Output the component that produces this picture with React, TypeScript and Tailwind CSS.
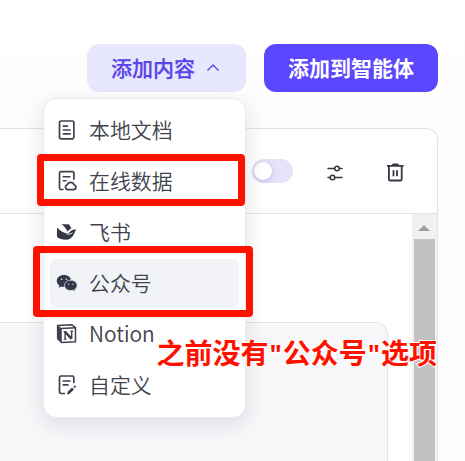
import React from "react";

type IconProps = { children: React.ReactNode; filled?: boolean };

function Icon({ children, filled }: IconProps) {
  return (
    <svg
      viewBox="0 0 22 22"
      className="h-[22px] w-[22px] shrink-0"
      fill={filled ? "#343849" : "none"}
      stroke={filled ? "none" : "#3e414d"}
      strokeWidth={1.7}
      strokeLinecap="round"
      strokeLinejoin="round"
    >
      {children}
    </svg>
  );
}

const DocIcon = () => (
  <Icon>
    <rect x="3.5" y="2" width="14.4" height="17.8" rx="1.6" />
    <path d="M7.3 7.1h4.2M7.3 11h6.8M7.3 14.9h6.8" strokeWidth={1.6} />
  </Icon>
);

const OnlineIcon = () => (
  <Icon>
    <path d="M7 19.5H4.900a1.4 1.4 0 0 1-1.4-1.4V3.100A1.4 1.4 0 0 1 4.900 1.700h11.600a1.4 1.4 0 0 1 1.4 1.4v6" />
    <path d="M7.3 6.800h6.6M7.3 10.700h2.8" strokeWidth={1.6} />
    <path d="M11.800 19.700a2.500 2.500 0 0 1-.5-4.900 3.500 3.500 0 0 1 6.700 0 2.500 2.500 0 0 1-.4 4.900z" strokeWidth={1.7} />
  </Icon>
);

const FeishuIcon = () => (
  <Icon filled>
    <path d="M5.500 3.300h7.300c1.200 1.100 2 2.500 2.500 4.300-1.400.6-2.500 1.700-3.700 3.100C10.200 7.800 8.200 5.200 5.500 3.300z" />
    <path d="M1 6.500c3 3.200 6.400 5.300 10.300 5.900l1.100.1c1.200-1.300 1.900-2.500 3.300-3.300 1.400-.9 3-1 4.600-.5-1.300 1.400-1.600 3-2.500 4.900-1.800 3.500-4.600 5.200-8.300 5.200-3.300 0-6-.8-8.500-2.700z" />
    <path d="M10.900 12.900c2.100.4 3.900.3 5.400-.9" fill="none" stroke="#fff" strokeWidth={0.900} />
  </Icon>
);

const WechatIcon = () => (
  <Icon filled>
    <path d="M8 3C4 3 .8 5.600.8 8.900c0 1.900 1 3.500 2.600 4.600l-.7 2.200 2.600-1.300c.9.300 1.700.4 2.700.4 4 0 7.200-2.600 7.200-5.900S12 3 8 3z" />
    <path
      d="M14.800 8.100c-3.500 0-6.300 2.300-6.300 5.300s2.800 5.200 6.300 5.200c.8 0 1.600-.1 2.300-.4l2.300 1.200-.6-2c1.400-.9 2.300-2.400 2.300-4 0-3-2.800-5.300-6.300-5.300z"
      stroke="#f1f3f8"
      strokeWidth={0.7}
    />
    <g fill="#f1f3f8">
      <circle cx="5.700" cy="7.200" r="0.8" />
      <circle cx="10.400" cy="7.200" r="0.8" />
      <circle cx="12.700" cy="12.100" r="0.7" />
      <circle cx="16.800" cy="12.100" r="0.7" />
    </g>
  </Icon>
);

const NotionIcon = () => (
  <Icon>
    <path d="M1.700 2.600 15.500 1.700l4 2.800v14.300L5.600 19.400 1.700 15.600z" strokeWidth={1.500} />
    <path d="M1.700 2.600 5.300 5.600v13.600L1.700 15.600z" fill="#3e414d" strokeWidth={0.8} />
    <path d="M5.400 5.500 19.500 4.700" strokeWidth={1.400} />
    <path d="M9.100 8.400v8M15.700 8v7.800" strokeWidth={1.400} strokeLinecap="butt" />
    <path d="m9 8.600 6.600 7.300" strokeWidth={2.400} strokeLinecap="butt" />
    <path d="M7.500 8.500h2.500M14.300 8.100h2.800M7.700 16.300h2.800" strokeWidth={1.100} strokeLinecap="butt" />
  </Icon>
);

const CustomIcon = () => (
  <Icon>
    <path d="M8.300 19.500H4.900a1.400 1.400 0 0 1-1.400-1.400V3.400a1.400 1.400 0 0 1 1.400-1.400h11.500a1.400 1.400 0 0 1 1.400 1.400v5.100" />
    <path d="M7.300 7h6.600M7.300 10.900h4.600" strokeWidth={1.700} />
    <path d="m12.700 18.700 4.300-4.300" strokeWidth={2.800} strokeLinecap="butt" />
    <path d="m12.200 19.200 1-1M18.700 12.700l.1-.1" strokeWidth={2.200} />
  </Icon>
);

const items = [
  { label: "本地文档", icon: <DocIcon /> },
  { label: "在线数据", icon: <OnlineIcon /> },
  { label: "飞书", icon: <FeishuIcon /> },
  { label: "公众号", icon: <WechatIcon />, active: true },
  { label: "Notion", icon: <NotionIcon /> },
  { label: "自定义", icon: <CustomIcon /> },
];

function Menu() {
  return (
    <div className="absolute top-[98px] left-[43px] flex h-[320px] w-[203px] flex-col gap-[3px] rounded-[13px] border border-[#ebebef] bg-white px-1.5 py-[7px] shadow-[0_6px_22px_rgba(30,30,50,0.13)]">
      {items.map((item) => (
        <div
          key={item.label}
          className={`flex h-12 shrink-0 items-center gap-[11px] rounded-md pl-1.5 text-[20.9px] font-[350] text-[#40434d] ${item.active ? "bg-[#f1f3f7]" : ""}`}
        >
          {item.icon}
          <span className="pb-0.5 leading-none">{item.label}</span>
        </div>
      ))}
    </div>
  );
}

const Quote = () => (
  <span className="inline-block w-[14.2px] text-center font-['Open_Sans',sans-serif] text-[26px] leading-none font-bold">"</span>
);

export default function App() {
  return (
    <div className="relative flex h-[461px] w-[465px] flex-col overflow-hidden bg-[#fdfdfe] font-['Noto_Sans_CJK_SC',sans-serif]">
      <header className="flex h-32 shrink-0 items-start justify-end gap-[18px] bg-linear-to-b from-white to-[#fdfdfe] pt-11 pr-[27px]">
        <button className="flex h-12 w-[159px] items-center rounded-xl bg-[#e7e7fe] pl-6 text-[21px] font-medium text-[#5a43e8] [-webkit-text-stroke:0.25px_#5a43e8]">
          <span>添加内容</span>
          <svg className="ml-[11px] h-3 w-3.5" viewBox="0 0 14 12" fill="none" stroke="#5a43e8" strokeWidth="1.4">
            <path d="m1.500 8.500 5.500-5.500 5.500 5.500" />
          </svg>
        </button>
        <button className="flex h-12 w-[174px] items-center justify-center rounded-xl bg-[#5c46ff] text-[21px] font-bold text-white">
          添加到智能体
        </button>
      </header>

      <main className="mr-[27px] flex flex-1 flex-col overflow-hidden rounded-tr-xl border-t border-r border-[#e3e3e7] bg-white">
        <div className="flex h-[85px] shrink-0 items-center justify-end border-b border-[#e3e3e7] pr-[31px]">
          <div className="mr-[31px] flex h-6 w-[41px] items-center rounded-full bg-[#e4e3fa] pl-0.5">
            <div className="h-[18px] w-[18px] rounded-full bg-white shadow-[0_1px_4px_rgba(60,50,140,0.25)]" />
          </div>
          <svg className="mt-1 mr-[38px] h-[22px] w-[22px]" viewBox="0 0 22 22" fill="none" stroke="#343744" strokeWidth="1.500" strokeLinecap="round">
            <path d="M4 6.500h6.500M15.500 6.500h2.500M4 15.500h2M11 15.500h7" />
            <circle cx="13" cy="6.500" r="2.300" />
            <circle cx="8.500" cy="15.500" r="2.300" />
          </svg>
          <svg className="mt-0.5 h-[22px] w-[22px]" viewBox="0 0 22 22" fill="none" stroke="#343744" strokeWidth="1.800">
            <path d="M3 4.900h16.600M4.900 5v13.200q0 1.300 1.300 1.300h10.200q1.300 0 1.300-1.300V5M9.500 9.200v6M13 9.200v6" />
            <path d="M7.700 4.700q0-2.300 2-2.300h3.300q2 0 2 2.300z" fill="#343744" stroke="none" />
          </svg>
        </div>
        <div className="flex min-h-0 flex-1 justify-between">
          <div className="mt-[108px] w-[388px] rounded-tr-xl border-t border-r border-[#e2e3e8] bg-[#f8f8fb]" />
          <div className="flex w-[25px] flex-col bg-[#f1f1f1] pr-px">
            <div className="flex h-[25px] items-center justify-center pt-0.5">
              <svg className="h-1.5 w-3" viewBox="0 0 12 6">
                <path d="M0 6 6 0l6 6z" fill="#a0a0a0" />
              </svg>
            </div>
            <div className="mr-px ml-0.5 flex-1 bg-[#c1c1c1]" />
          </div>
        </div>
      </main>

      <Menu />
      <div className="absolute top-[154px] left-[36.5px] h-[52px] w-[208px] rounded-[4px] border-7 border-[#ff1100]" />
      <div className="absolute top-[246px] left-[32.5px] h-[71px] w-[220px] rounded-[4px] border-7 border-[#ff1100]" />
      <p className="absolute top-[338px] left-[156.5px] text-[28px] leading-[28px] font-bold whitespace-nowrap text-[#ff1100] [paint-order:stroke_fill] [-webkit-text-stroke:2px_white]">
        之前没有<Quote />公众号<Quote />选项
      </p>
    </div>
  );
}
